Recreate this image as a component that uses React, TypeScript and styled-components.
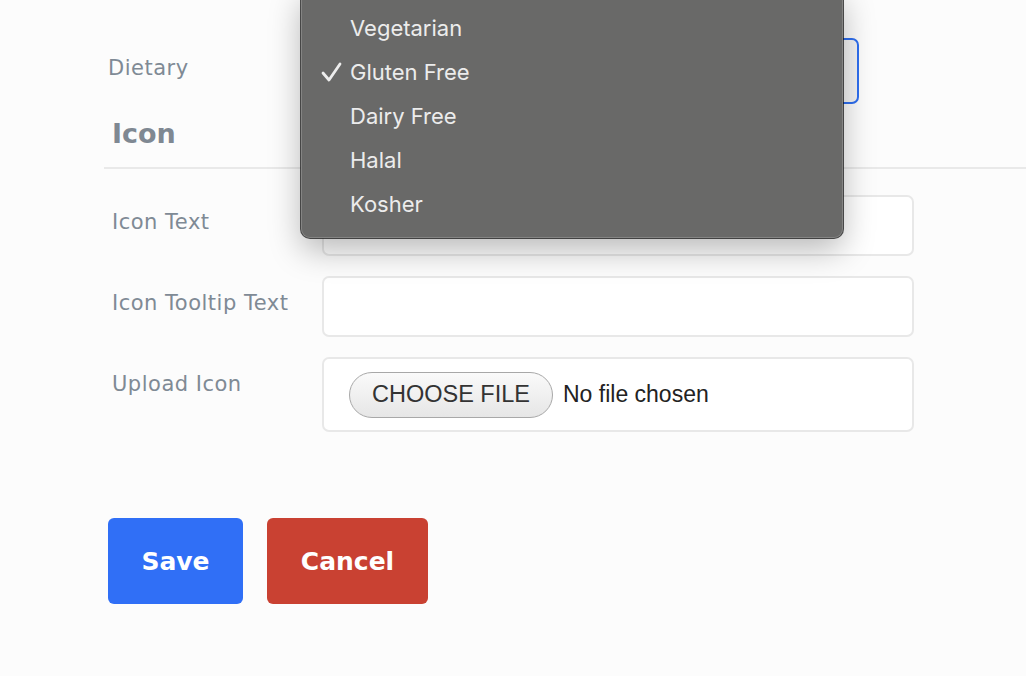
import React from 'react';
import styled, {createGlobalStyle} from "styled-components";

const GlobalStyle = createGlobalStyle`
    html, body {
        margin: 0;
        padding: 0;
        background: #fcfcfc;
        overflow: hidden;
    }
`

const dietaryOptions = ['Vegetarian', 'Gluten Free', 'Dairy Free', 'Halal', 'Kosher'];
const selectedOption = 'Gluten Free';

const iconFields = ['Icon Text', 'Icon Tooltip Text'];

const CheckMark = () => (
    <svg width="22" height="20" viewBox="0 0 22 20">
        <path d="M2 11 L8 18 L19 2" fill="none" stroke="#ededed" strokeWidth="2.8"
              strokeLinecap="round" strokeLinejoin="round"/>
    </svg>
);

export default function App() {
    return (
        <>
            <GlobalStyle/>
            <Page>
                <DietaryRow>
                    <Label indent={4} offset={17}>Dietary</Label>
                    <SelectWrap>
                        <SelectBox/>
                        <Menu>
                            {dietaryOptions.map(option => (
                                <MenuItem key={option}>
                                    <CheckSlot>{option === selectedOption && <CheckMark/>}</CheckSlot>
                                    {option}
                                </MenuItem>
                            ))}
                        </Menu>
                    </SelectWrap>
                </DietaryRow>

                <SectionTitle>Icon</SectionTitle>
                <Divider/>

                <Rows>
                    {iconFields.map(field => (
                        <Row key={field}>
                            <Label indent={8} offset={14}>{field}</Label>
                            <TextInput/>
                        </Row>
                    ))}
                    <Row>
                        <Label indent={8} offset={14}>Upload Icon</Label>
                        <FileBox>
                            <ChooseButton>CHOOSE FILE</ChooseButton>
                            <FileName>No file chosen</FileName>
                        </FileBox>
                    </Row>
                </Rows>

                <Actions>
                    <ActionButton color="#306ff6" width={135}>Save</ActionButton>
                    <ActionButton color="#c94132" width={161}>Cancel</ActionButton>
                </Actions>
            </Page>
        </>
    );
}

const Page = styled.div`
    padding: 38px 0 0 104px;
    font-family: "DejaVu Sans", Verdana, sans-serif;
`

const DietaryRow = styled.div`
    display: flex;
    align-items: flex-start;
`

const Label = styled.div<{ indent: number, offset: number }>`
    width: ${props => 218 - props.indent}px;
    padding-left: ${props => props.indent}px;
    padding-top: ${props => props.offset}px;
    color: #7f8a95;
    font-size: 21px;
    letter-spacing: 0.5px;
    line-height: 26px;
    flex-shrink: 0;
`

const SelectWrap = styled.div`
    position: relative;
`

const SelectBox = styled.div`
    width: 537px;
    height: 66px;
    box-sizing: border-box;
    border: 2px solid #2f6ff0;
    border-radius: 7px;
    background: #f4f4f4;
`

const Menu = styled.div`
    position: absolute;
    top: -50px;
    left: -21px;
    width: 542px;
    box-sizing: border-box;
    padding: 18px 0 12px;
    background: #696968;
    border-radius: 9px;
    box-shadow: 0 0 0 1px rgba(20, 20, 20, 0.75),
    inset 0 0 0 1px rgba(255, 255, 255, 0.18),
    0 12px 32px rgba(0, 0, 0, 0.28);
    font-family: Inter, "Noto Sans", sans-serif;
    z-index: 2;
`

const MenuItem = styled.div`
    display: flex;
    align-items: center;
    height: 44px;
    color: #ececec;
    font-size: 22px;
`

const CheckSlot = styled.div`
    width: 49px;
    padding-left: 20px;
    box-sizing: border-box;
    display: flex;
    align-items: center;
`

const SectionTitle = styled.h2`
    margin: 14px 0 0 8px;
    color: #7f8892;
    font-size: 27px;
    font-weight: bold;
    line-height: 32px;
`

const Divider = styled.div`
    margin-top: 17px;
    height: 2px;
    background: #e9e9e9;
`

const Rows = styled.div`
    display: flex;
    flex-direction: column;
    gap: 20px;
    margin-top: 26px;
`

const Row = styled.div`
    display: flex;
    align-items: flex-start;
`

const TextInput = styled.div`
    width: 592px;
    height: 61px;
    box-sizing: border-box;
    border: 2px solid #e8e8e8;
    border-radius: 7px;
    background: #fff;
`

const FileBox = styled.div`
    display: flex;
    align-items: center;
    width: 592px;
    height: 75px;
    box-sizing: border-box;
    padding-left: 25px;
    border: 2px solid #e8e8e8;
    border-radius: 7px;
    background: #fff;
    font-family: "Liberation Sans", Arial, sans-serif;
`

const ChooseButton = styled.div`
    width: 204px;
    height: 46px;
    box-sizing: border-box;
    display: flex;
    align-items: center;
    justify-content: center;
    border: 1.5px solid #a8a8a8;
    border-radius: 23px;
    background: linear-gradient(#fafafa, #e6e6e6);
    color: #333;
    font-size: 23.5px;
`

const FileName = styled.span`
    margin-left: 10px;
    color: #222;
    font-size: 23px;
`

const Actions = styled.div`
    display: flex;
    gap: 24px;
    margin: 86px 0 0 4px;
`

const ActionButton = styled.div<{ color: string, width: number }>`
    width: ${props => props.width}px;
    height: 86px;
    display: flex;
    align-items: center;
    justify-content: center;
    border-radius: 6px;
    background: ${props => props.color};
    color: #fff;
    font-size: 25px;
    font-weight: bold;
`
